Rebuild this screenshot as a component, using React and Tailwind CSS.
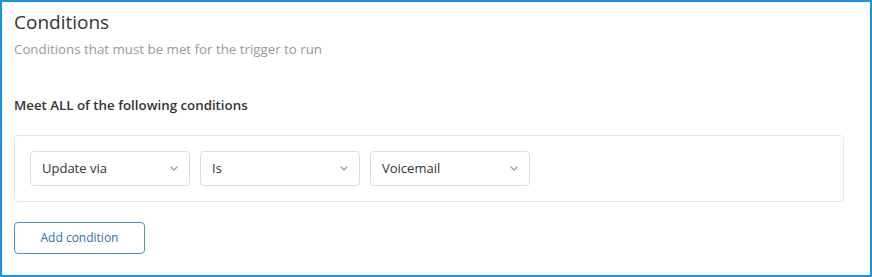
const selects = ["Update via", "Is", "Voicemail"];

function Chevron() {
  return (
    <svg width="8" height="5" viewBox="0 0 8 5" fill="none" className="text-[#999]">
      <path d="M1 1 4 4 7 1" stroke="currentColor" strokeWidth="1.2" strokeLinecap="round" strokeLinejoin="round" />
    </svg>
  );
}

function Select({ label }) {
  return (
    <div className="flex h-[35px] w-[160px] items-center justify-between rounded-[4px] border border-[#dcdcdc] bg-white pl-[11px] pr-[11px] text-[13px] text-[#333]">
      <span>{label}</span>
      <Chevron />
    </div>
  );
}

export default function App() {
  return (
    <div
      className="h-[277px] w-[872px] border-2 border-[#1793e8] bg-white px-[12px] pt-[6px]"
      style={{ fontFamily: '"Open Sans", "Noto Sans", sans-serif' }}
    >
      <h2 className="text-[19px] leading-[28px] font-normal text-[#333]">Conditions</h2>
      <p className="mt-[4px] text-[13.3px] leading-[18px] text-[#999]">
        Conditions that must be met for the trigger to run
      </p>
      <div className="mt-[38px] text-[13.3px] leading-[18px] font-semibold text-[#333]">
        Meet ALL of the following conditions
      </div>
      <div className="mt-[21px] flex w-[830px] gap-[10px] rounded-[4px] border border-[#e6e6e6] p-[15px]">
        {selects.map((s) => (
          <Select key={s} label={s} />
        ))}
      </div>
      <button className="mt-[20px] h-[32px] w-[131px] rounded-[4px] border border-[#4a8fd6] text-[12px] text-[#2f6fb8]">
        Add condition
      </button>
    </div>
  );
}
